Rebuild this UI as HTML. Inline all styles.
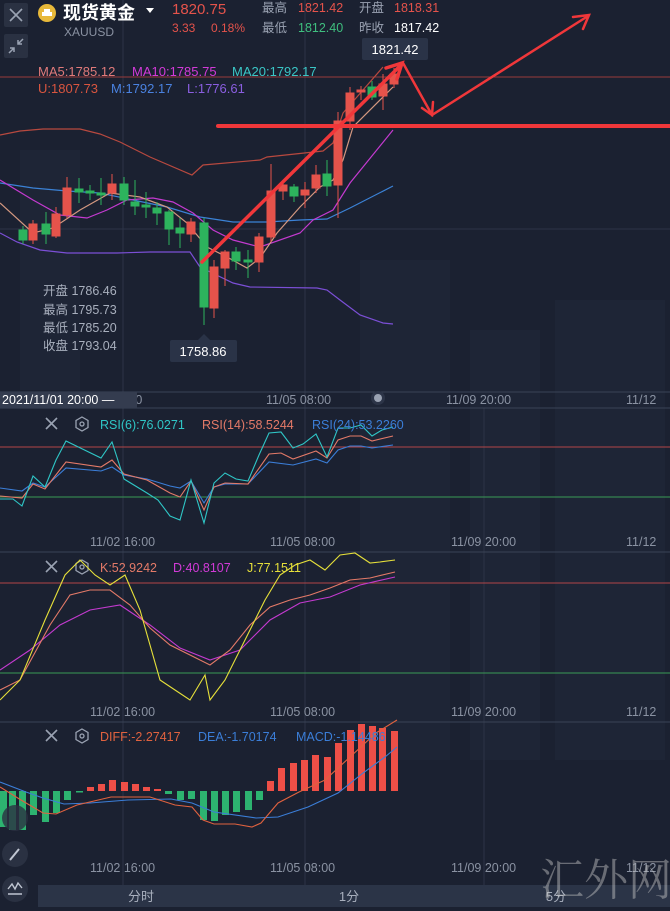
<!DOCTYPE html>
<html><head><meta charset="utf-8"><style>
html,body{margin:0;padding:0;background:#1b2131;}
svg{display:block;font-family:"Liberation Sans","Noto Sans CJK SC",sans-serif;}
</style></head><body>
<svg width="670" height="911" viewBox="0 0 670 911" xmlns="http://www.w3.org/2000/svg">
<rect width="670" height="911" fill="#1b2131"/>
<g fill="#1e2536">
<rect x="360" y="260" width="90" height="500"/><rect x="470" y="330" width="70" height="430"/><rect x="555" y="300" width="110" height="460"/><rect x="20" y="150" width="60" height="240"/>
</g>
<g stroke="#2c3447" stroke-width="1">
<line x1="123" y1="0" x2="123" y2="885"/><line x1="305" y1="0" x2="305" y2="885"/><line x1="484" y1="408" x2="484" y2="885"/>
<line x1="0" y1="229" x2="670" y2="229"/>
<line x1="0" y1="392" x2="670" y2="392" stroke="#3a4356"/><line x1="0" y1="408" x2="670" y2="408" stroke="#3a4356"/>
<line x1="0" y1="552" x2="670" y2="552" stroke="#3a4356"/><line x1="0" y1="722" x2="670" y2="722" stroke="#3a4356"/>
</g>
<line x1="0" y1="77" x2="670" y2="77" stroke="#9a3a3c" stroke-width="1"/>

<rect x="4" y="3" width="24" height="24" rx="2" fill="#2a3142"/>
<path d="M10 9 L22 21 M22 9 L10 21" stroke="#9aa3b3" stroke-width="1.6"/>
<rect x="4" y="34" width="24" height="24" rx="2" fill="#2a3142"/>
<path d="M9 53 L14 48 M10 48 H14 V52 M23 39 L18 44 M18 40 V44 H22" stroke="#9aa3b3" stroke-width="1.5" fill="none"/>
<circle cx="47" cy="13" r="9" fill="#e8b93a"/>
<rect x="42" y="12" width="10" height="4" fill="#fff"/><rect x="44" y="9" width="6" height="3" fill="#fff"/>
<text x="63" y="19" font-size="18" font-weight="bold" fill="#fff">现货黄金</text>
<path d="M146 8 L154 8 L150 13 Z" fill="#fff"/>
<text x="64" y="36" font-size="12" fill="#8a92a2">XAUUSD</text>
<text x="172" y="14" font-size="15" fill="#e5534b">1820.75</text>
<text x="172" y="32" font-size="12" fill="#e5534b">3.33</text>
<text x="211" y="32" font-size="12" fill="#e5534b">0.18%</text>
<g font-size="12.5">
<text x="262" y="12" fill="#9aa2b2">最高</text><text x="298" y="12" fill="#e5534b">1821.42</text>
<text x="359" y="12" fill="#9aa2b2">开盘</text><text x="394" y="12" fill="#e5534b">1818.31</text>
<text x="262" y="32" fill="#9aa2b2">最低</text><text x="298" y="32" fill="#3fbf7f">1812.40</text>
<text x="359" y="32" fill="#9aa2b2">昨收</text><text x="394" y="32" fill="#fff">1817.42</text>
</g>
<g font-size="13">
<text x="38" y="76" fill="#e07a7a">MA5:1785.12</text>
<text x="132" y="76" fill="#d23ad8">MA10:1785.75</text>
<text x="232" y="76" fill="#3ac6c6">MA20:1792.17</text>
<text x="38" y="93" fill="#d9553f">U:1807.73</text>
<text x="111" y="93" fill="#4a82e0">M:1792.17</text>
<text x="187" y="93" fill="#8a5ee0">L:1776.61</text>
</g>
<rect x="362" y="38" width="66" height="22" rx="2" fill="#2a3347"/>
<text x="395" y="54" font-size="13" fill="#fff" text-anchor="middle">1821.42</text>

<g fill="none" stroke-width="1.2">
<polyline stroke="#b8493f" points="0,135 20,131 43,129 80,129 100,134 120,142 150,157 192,175 203,165 260,160 267,157 323,151 333,143 343,113 383,67"/>
<polyline stroke="#3b82d6" points="0,183 33,188 67,191 100,193 133,200 167,207 200,217 233,222 267,222 300,220 327,219 350,208 393,186"/>
<polyline stroke="#7b4fd6" points="0,233 17,242 40,250 67,253 117,253 150,252 190,252 200,267 233,283 250,287 317,288 327,290 340,300 360,315 383,323 393,324"/>
<polyline stroke="#c43ad0" points="0,180 33,200 60,215 87,218 107,210 127,200 153,198 173,202 193,213 213,230 233,240 260,247 300,233 313,220 333,210 350,183 393,130"/>
<polyline stroke="#d49880" points="0,203 33,233 53,228 80,210 110,193 140,197 167,207 187,223 207,247 227,257 247,268 260,258 277,233 300,207 320,187 333,180 343,160 353,127 393,87"/>
</g>
<g stroke-width="1">
<g fill="#e5534b" stroke="#e5534b">
<line x1="33" y1="220" x2="33" y2="244"/><rect x="29" y="224" width="8" height="16"/>
<line x1="56" y1="207" x2="56" y2="238"/><rect x="52" y="214" width="8" height="22"/>
<line x1="67" y1="177" x2="67" y2="218"/><rect x="63" y="188" width="8" height="27"/>
<line x1="112" y1="174" x2="112" y2="200"/><rect x="108" y="184" width="8" height="9"/>
<line x1="191" y1="218" x2="191" y2="242"/><rect x="187" y="222" width="8" height="12"/>
<line x1="214" y1="260" x2="214" y2="318"/><rect x="210" y="267" width="8" height="41"/>
<line x1="225" y1="250" x2="225" y2="286"/><rect x="221" y="252" width="8" height="16"/>
<line x1="259" y1="233" x2="259" y2="272"/><rect x="255" y="237" width="8" height="25"/>
<line x1="271" y1="164" x2="271" y2="242"/><rect x="267" y="191" width="8" height="46"/>
<line x1="283" y1="180" x2="283" y2="200"/><rect x="279" y="185" width="8" height="6"/>
<line x1="305" y1="182" x2="305" y2="208"/><rect x="301" y="190" width="8" height="5"/>
<line x1="316" y1="165" x2="316" y2="193"/><rect x="312" y="175" width="8" height="13"/>
<line x1="338" y1="112" x2="338" y2="218"/><rect x="334" y="121" width="8" height="64"/>
<line x1="350" y1="87" x2="350" y2="130"/><rect x="346" y="93" width="8" height="28"/>
<line x1="361" y1="86" x2="361" y2="100"/><rect x="357" y="90" width="8" height="2"/>
<line x1="383" y1="74" x2="383" y2="110"/><rect x="379" y="84" width="8" height="12"/>
<line x1="394" y1="68" x2="394" y2="88"/><rect x="390" y="74" width="8" height="10"/>
</g>
<g fill="#2db35d" stroke="#2db35d">
<line x1="23" y1="226" x2="23" y2="244"/><rect x="19" y="230" width="8" height="10"/>
<line x1="46" y1="212" x2="46" y2="244"/><rect x="42" y="224" width="8" height="10"/>
<line x1="79" y1="178" x2="79" y2="203"/><rect x="75" y="189" width="8" height="3"/>
<line x1="90" y1="185" x2="90" y2="200"/><rect x="86" y="191" width="8" height="2"/>
<line x1="101" y1="178" x2="101" y2="205"/><rect x="97" y="193" width="8" height="2"/>
<line x1="124" y1="177" x2="124" y2="205"/><rect x="120" y="184" width="8" height="16"/>
<line x1="135" y1="180" x2="135" y2="215"/><rect x="131" y="202" width="8" height="4"/>
<line x1="146" y1="192" x2="146" y2="218"/><rect x="142" y="205" width="8" height="2"/>
<line x1="157" y1="202" x2="157" y2="225"/><rect x="153" y="208" width="8" height="5"/>
<line x1="169" y1="210" x2="169" y2="245"/><rect x="165" y="212" width="8" height="17"/>
<line x1="180" y1="218" x2="180" y2="248"/><rect x="176" y="228" width="8" height="5"/>
<line x1="204" y1="218" x2="204" y2="325"/><rect x="200" y="223" width="8" height="84"/>
<line x1="236" y1="247" x2="236" y2="270"/><rect x="232" y="252" width="8" height="9"/>
<line x1="248" y1="250" x2="248" y2="278"/><rect x="244" y="260" width="8" height="2"/>
<line x1="294" y1="184" x2="294" y2="202"/><rect x="290" y="187" width="8" height="9"/>
<line x1="327" y1="160" x2="327" y2="196"/><rect x="323" y="174" width="8" height="12"/>
<line x1="372" y1="81" x2="372" y2="100"/><rect x="368" y="87" width="8" height="10"/>
</g>
</g>
<g stroke="#f0373a" fill="none" stroke-linecap="round">
<line x1="218" y1="126" x2="670" y2="126" stroke-width="4"/>
<line x1="202" y1="262" x2="400" y2="66" stroke-width="3.5"/>
<path d="M386 68 L402 63 L397 79" stroke-width="3.5"/>
<polyline points="403,63 432,115 588,16" stroke-width="2.5"/>
<path d="M422 108 L432 115 L433 102" stroke-width="2.5"/>
<path d="M573 17 L589 15 L583 29" stroke-width="2.5"/>
</g>

<g font-size="12.5" fill="#a8afbd">
<text x="43" y="295">开盘 1786.46</text>
<text x="43" y="314">最高 1795.73</text>
<text x="43" y="332">最低 1785.20</text>
<text x="43" y="350">收盘 1793.04</text>
</g>
<path d="M198 340 L204 334 L210 340 Z" fill="#2a3347"/>
<rect x="170" y="340" width="67" height="22" rx="2" fill="#2a3347"/>
<text x="203" y="356" font-size="13" fill="#fff" text-anchor="middle">1758.86</text>

<g font-size="12.5" fill="#8a92a2">
<text x="118" y="404">3:00</text>
<text x="266" y="404">11/05 08:00</text>
<text x="446" y="404">11/09 20:00</text>
<text x="626" y="404">11/12</text>
</g>
<rect x="0" y="392" width="137" height="16" fill="#343c4f"/>
<text x="2" y="404" font-size="12.5" fill="#fff">2021/11/01 20:00 —</text>
<circle cx="378" cy="398" r="7" fill="#2c3447"/><circle cx="378" cy="398" r="4" fill="#9aa2b2"/>

<line x1="0" y1="447" x2="670" y2="447" stroke="#b34548"/>
<line x1="0" y1="497" x2="670" y2="497" stroke="#3a9a55"/>
<g fill="none" stroke-width="1.1">
<polyline stroke="#3b7ed8" points="0,488 22,491 33,483 45,487 66,468 101,471 112,467 124,475 147,479 170,486 180,488 191,481 204,503 214,487 225,484 248,484 269,462 293,465 316,459 327,463 338,450 350,446 361,446 372,448 393,445"/>
<polyline stroke="#e47a68" points="0,496 22,498 33,484 45,489 66,462 101,467 112,460 124,474 147,480 170,493 180,497 191,481 204,510 214,487 225,483 248,484 269,454 281,453 293,459 316,451 327,458 338,440 350,436 361,436 372,441 393,436"/>
<polyline stroke="#2fc6c6" points="0,499 13,499 22,506 33,476 45,487 56,460 66,441 101,458 112,442 124,479 147,493 158,500 170,516 180,520 191,480 204,523 214,483 225,473 236,479 248,481 259,455 269,433 281,432 293,448 303,444 316,434 327,457 338,428 350,428 361,425 372,436 382,430 393,427"/>
</g>
<g font-size="12.5">
<text x="100" y="429" fill="#2fc6c6">RSI(6):76.0271</text>
<text x="202" y="429" fill="#e47a68">RSI(14):58.5244</text>
<text x="312" y="429" fill="#3b7ed8">RSI(24):53.2260</text>
</g>
<g font-size="12.5" fill="#8a92a2">
<text x="90" y="546">11/02 16:00</text><text x="270" y="546">11/05 08:00</text><text x="451" y="546">11/09 20:00</text><text x="626" y="546">11/12</text>
<text x="90" y="716">11/02 16:00</text><text x="270" y="716">11/05 08:00</text><text x="451" y="716">11/09 20:00</text><text x="626" y="716">11/12</text>
<text x="90" y="872">11/02 16:00</text><text x="270" y="872">11/05 08:00</text><text x="451" y="872">11/09 20:00</text><text x="626" y="872">11/12</text>
</g>
<g stroke="#9aa2b2" stroke-width="1.6" fill="none">
<path d="M46 418 L57 429 M57 418 L46 429"/>
<path d="M46 561 L57 572 M57 561 L46 572"/>
<path d="M46 730 L57 741 M57 730 L46 741"/>
</g>
<g stroke="#9aa2b2" stroke-width="1.3" fill="none">
<polygon points="82,417 88,420.5 88,427.5 82,431 76,427.5 76,420.5"/><circle cx="82" cy="424" r="2"/>
<polygon points="82,560 88,563.5 88,570.5 82,574 76,570.5 76,563.5"/><circle cx="82" cy="567" r="2"/>
<polygon points="82,729 88,732.5 88,739.5 82,743 76,739.5 76,732.5"/><circle cx="82" cy="736" r="2"/>
</g>

<line x1="0" y1="583" x2="670" y2="583" stroke="#b34548"/>
<line x1="0" y1="673" x2="670" y2="673" stroke="#3a9a55"/>
<g fill="none" stroke-width="1.1">
<polyline stroke="#c43ad0" points="0,670 30,650 60,625 90,610 120,605 150,625 180,648 210,660 240,650 270,620 300,603 330,597 360,585 395,577"/>
<polyline stroke="#e47a68" points="0,690 20,680 50,625 70,595 90,590 110,590 130,605 150,628 170,645 190,655 210,665 230,650 250,625 270,607 290,600 310,595 330,588 350,580 370,578 395,572"/>
<polyline stroke="#e6e03a" points="0,700 20,680 45,620 65,575 80,560 95,575 110,585 125,575 140,610 160,680 175,690 190,700 205,675 210,700 225,680 245,640 265,600 280,575 295,565 310,560 325,570 340,555 355,553 370,563 380,562 395,560"/>
</g>
<g font-size="12.5">
<text x="100" y="572" fill="#e47a68">K:52.9242</text>
<text x="173" y="572" fill="#d23ad8">D:40.8107</text>
<text x="247" y="572" fill="#e6e03a">J:77.1511</text>
</g>

<g fill="#2db370">
<rect x="0" y="791" width="7" height="36"/><rect x="9" y="791" width="7" height="39"/><rect x="19" y="791" width="7" height="39"/><rect x="30" y="791" width="7" height="24"/><rect x="42" y="791" width="7" height="31"/><rect x="53" y="791" width="7" height="22"/><rect x="64" y="791" width="7" height="9"/><rect x="76" y="791" width="7" height="1.5"/>
<rect x="165" y="791" width="7" height="3"/><rect x="177" y="791" width="7" height="9"/><rect x="188" y="791" width="7" height="8"/><rect x="200" y="791" width="7" height="29"/><rect x="211" y="791" width="7" height="30"/><rect x="222" y="791" width="7" height="24"/><rect x="233" y="791" width="7" height="21"/><rect x="245" y="791" width="7" height="19"/><rect x="256" y="791" width="7" height="9"/>
</g>
<g fill="#ee4f47">
<rect x="87" y="787" width="7" height="4"/><rect x="98" y="784" width="7" height="7"/><rect x="109" y="780" width="7" height="11"/><rect x="121" y="782" width="7" height="9"/><rect x="132" y="784" width="7" height="7"/><rect x="143" y="787" width="7" height="4"/><rect x="154" y="789" width="7" height="2"/>
<rect x="267" y="781" width="7" height="10"/><rect x="278" y="768" width="7" height="23"/><rect x="290" y="763" width="7" height="28"/><rect x="301" y="760" width="7" height="31"/><rect x="312" y="755" width="7" height="36"/><rect x="324" y="757" width="7" height="34"/><rect x="335" y="743" width="7" height="48"/><rect x="347" y="730" width="7" height="61"/><rect x="358" y="724" width="7" height="67"/><rect x="369" y="726" width="7" height="65"/><rect x="379" y="728" width="7" height="63"/><rect x="391" y="731" width="7" height="60"/>
</g>
<g fill="none" stroke-width="1.1">
<polyline stroke="#3b7ed8" points="0,782 26,792 43,798 64,804 90,803 128,800 171,799 192,803 214,812 256,818 278,817 308,807 338,793 363,773 385,757 397,747"/>
<polyline stroke="#e0623f" points="0,787 21,800 43,813 56,814 77,805 111,797 150,797 175,805 192,807 203,820 214,824 235,824 252,827 261,823 278,803 299,792 325,780 350,757 376,733 397,720"/>
</g>
<g font-size="12.5">
<text x="100" y="741" fill="#e0623f">DIFF:-2.27417</text>
<text x="198" y="741" fill="#3b7ed8">DEA:-1.70174</text>
<text x="296" y="741" fill="#3b7ed8">MACD:-1.14486</text>
</g>

<circle cx="15" cy="818" r="13" fill="#2a3142" opacity="0.8"/>
<circle cx="15" cy="854" r="13" fill="#2a3142"/>
<path d="M10 860 L19 849" stroke="#c0c6d2" stroke-width="2"/>
<circle cx="15" cy="889" r="13" fill="#2a3142"/>
<path d="M8 889 L12 884 L15 889 L18 883 L22 888 M8 894 H22" stroke="#c0c6d2" stroke-width="1.4" fill="none"/>

<rect x="38" y="885" width="632" height="22" fill="#2b3447"/>
<g font-size="13" fill="#a8afbd" text-anchor="middle">
<text x="141" y="901">分时</text><text x="349" y="901">1分</text><text x="556" y="901">5分</text>
</g>
<text x="540" y="895" font-size="44" fill="#c8c8c8" opacity="0.45" font-family="'Noto Serif CJK SC',serif">汇外网</text>
</svg>
</body></html>
